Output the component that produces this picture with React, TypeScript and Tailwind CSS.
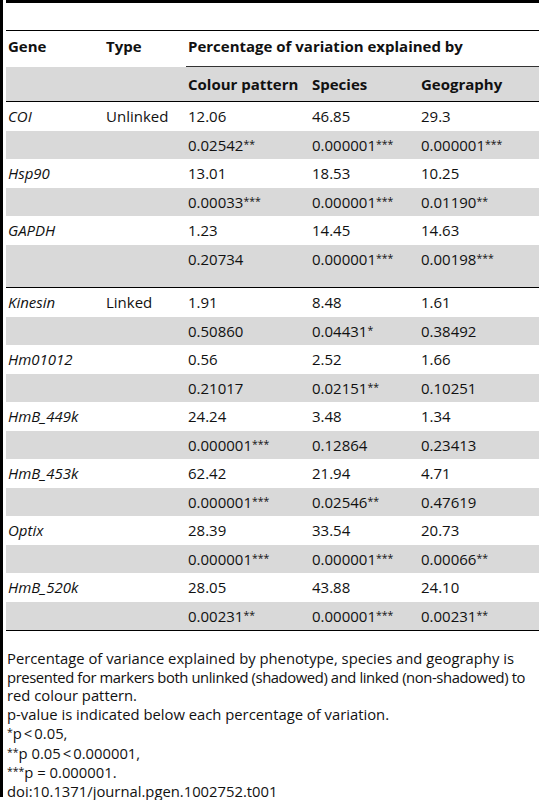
const cols = "grid grid-cols-[98px_82px_124px_109px_1fr] items-center"

type Marker = {
  gene: string
  type?: string
  pct: [string, string, string]
  p: [string, string, string]
}

const unlinked: Marker[] = [
  { gene: "COI", type: "Unlinked", pct: ["12.06", "46.85", "29.3"], p: ["0.02542**", "0.000001***", "0.000001***"] },
  { gene: "Hsp90", pct: ["13.01", "18.53", "10.25"], p: ["0.00033***", "0.000001***", "0.01190**"] },
  { gene: "GAPDH", pct: ["1.23", "14.45", "14.63"], p: ["0.20734", "0.000001***", "0.00198***"] },
]

const linked: Marker[] = [
  { gene: "Kinesin", type: "Linked", pct: ["1.91", "8.48", "1.61"], p: ["0.50860", "0.04431*", "0.38492"] },
  { gene: "Hm01012", pct: ["0.56", "2.52", "1.66"], p: ["0.21017", "0.02151**", "0.10251"] },
  { gene: "HmB_449k", pct: ["24.24", "3.48", "1.34"], p: ["0.000001***", "0.12864", "0.23413"] },
  { gene: "HmB_453k", pct: ["62.42", "21.94", "4.71"], p: ["0.000001***", "0.02546**", "0.47619"] },
  { gene: "Optix", pct: ["28.39", "33.54", "20.73"], p: ["0.000001***", "0.000001***", "0.00066**"] },
  { gene: "HmB_520k", pct: ["28.05", "43.88", "24.10"], p: ["0.00231**", "0.000001***", "0.00231**"] },
]

// small raised asterisks, as in the source
function Stars({ n }: { n: string }) {
  return <span className="text-[10.5px] align-[3px]">{n}</span>
}

function PValue({ v }: { v: string }) {
  const num = v.replace(/\*+$/, "")
  const stars = v.slice(num.length)
  return (
    <span className="pl-[2px]">
      {num}
      {stars && <Stars n={stars} />}
    </span>
  )
}

function MarkerRows({ m }: { m: Marker }) {
  return (
    <>
      <div className={`${cols} h-[28.5px]`}>
        <span className="pl-[2px] italic">{m.gene}</span>
        <span className="pl-[2px]">{m.type ?? ""}</span>
        {m.pct.map((v, i) => (
          <span key={i} className="pl-[2px]">{v}</span>
        ))}
      </div>
      <div className={`${cols} h-[28.5px] bg-[#d9d9d9]`}>
        <span />
        <span />
        {m.p.map((v, i) => (
          <PValue key={i} v={v} />
        ))}
      </div>
    </>
  )
}

export default function App() {
  return (
    <div className="w-[539px] h-[800px] overflow-hidden bg-white text-[15px] text-[#111] font-['Open_Sans','Noto_Sans',sans-serif]">
      <div className="h-[797px] border-l-[3px] border-black pl-[3px]">
        {/* caption strip */}
        <div className="h-[31px] border-t-[3px] border-b border-black" />

        {/* header */}
        <div className={`${cols} h-[36px] font-bold`}>
          <span className="pl-[2px] pb-[5px]">Gene</span>
          <span className="pl-[2px] pb-[5px]">Type</span>
          <div className="col-span-3 h-full flex items-center pl-[2px] pb-[5px] border-b border-[#333]">
            Percentage of variation explained by
          </div>
        </div>
        <div className={`${cols} h-[35px] bg-[#d9d9d9] border-b border-black font-bold`}>
          <span />
          <span />
          <span className="pl-[2px]">Colour pattern</span>
          <span className="pl-[2px]">Species</span>
          <span className="pl-[2px]">Geography</span>
        </div>

        {/* unlinked markers */}
        <div className="border-b border-black">
          {unlinked.map((m) => (
            <MarkerRows key={m.gene} m={m} />
          ))}
          <div className="h-[14px] bg-[#d9d9d9]" />
        </div>

        {/* linked markers */}
        <div className="border-b border-black">
          {linked.map((m) => (
            <MarkerRows key={m.gene} m={m} />
          ))}
        </div>

        {/* footnotes */}
        <div className="mt-[18px] text-[14.8px] leading-[18.5px] pl-[1px] whitespace-nowrap">
          <p>Percentage of variance explained by phenotype, species and geography is</p>
          <p className="tracking-[-0.4px]">
            presented for markers both unlinked (shadowed) and linked (non-shadowed) to
          </p>
          <p>red colour pattern.</p>
          <p>p-value is indicated below each percentage of variation.</p>
          <p>
            <Stars n="*" />p<span className="px-[2px]">&lt;</span>0.05,
          </p>
          <p>
            <Stars n="**" />p 0.05<span className="px-[2px]">&lt;</span>0.000001,
          </p>
          <p>
            <Stars n="***" />p = 0.000001.
          </p>
          <p>doi:10.1371/journal.pgen.1002752.t001</p>
        </div>
      </div>
    </div>
  )
}
